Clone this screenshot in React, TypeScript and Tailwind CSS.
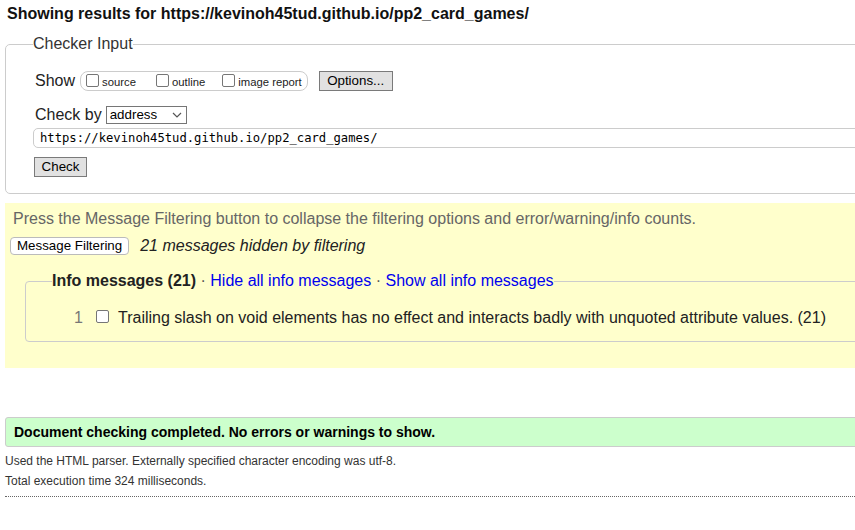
import React from 'react';

const Box = () => (
    <span className="inline-block w-[13px] h-[13px] border border-[#767676] rounded-[2px] bg-white shrink-0" />
);

const Chevron = () => (
    <svg width="10" height="6" viewBox="0 0 10 6" fill="none" stroke="#555" strokeWidth="1.2"><polyline points="1 1 5 5 9 1" /></svg>
);

const winBtn = "h-[20px] px-[7px] bg-[#e1e1e1] border border-[#7a7a7a] text-[13.33px] text-black leading-none flex items-center";

export default function App() {
    return (
        <div className="w-full overflow-hidden bg-white">
            <div className="w-[880px] px-[5px] font-['Liberation_Sans',Arial,sans-serif] text-[16px] text-[#222]">
                <h2 className="pt-[5px] pl-[2px] text-[16px] font-bold leading-[18px] text-[#111]">
                    Showing results for https://kevinoh45tud.github.io/pp2_card_games/
                </h2>

                <fieldset className="mt-[12px] border border-[#ccc] rounded-[5px] pb-[16px]">
                    <legend className="ml-[27px] text-[16px] leading-[18px] text-[#333]">Checker Input</legend>
                    <div className="pl-[29px]">
                        <div className="mt-[17px] flex items-center h-[21px]">
                            <span className="mr-[5px]">Show</span>
                            <div className="flex items-center h-[20px] border border-[#ccc] rounded-[8px] pl-[5px] pr-[5px] text-[11.3px]">
                                <Box /><span className="ml-[3px] mt-[3px] mr-[20px]">source</span>
                                <Box /><span className="ml-[3px] mt-[3px] mr-[17px]">outline</span>
                                <Box /><span className="ml-[3px] mt-[3px]">image report</span>
                            </div>
                            <button className={winBtn + " ml-[11px] w-[74px] justify-center text-[13.6px]"}>Options...</button>
                        </div>
                        <div className="mt-[15px] flex items-center h-[18px]">
                            <span className="mr-[4px]">Check by</span>
                            <div className="w-[81px] h-[18px] border border-[#767676] bg-white flex items-center justify-between pl-[3px] pr-[4px] text-[13.33px] text-black">
                                <span>address</span>
                                <Chevron />
                            </div>
                        </div>
                        <div className="mt-[4px] -ml-[2px] h-[20px] border border-[#ccc] rounded-[5px] flex items-center pl-[6px] font-['DejaVu_Sans_Mono',monospace] text-[12.2px] text-black">
                            https://kevinoh45tud.github.io/pp2_card_games/
                        </div>
                        <button className={winBtn + " mt-[9px] -ml-[1px] w-[53px] justify-center"}>Check</button>
                    </div>
                </fieldset>

                <div className="mt-[9px] w-[850px] bg-[#ffffcc] px-[5px] pt-[7px] pb-[26px]">
                    <p className="pl-[3px] leading-[18px] text-[#666]">
                        Press the Message Filtering button to collapse the filtering options and error/warning/info counts.
                    </p>
                    <div className="mt-[6px] flex items-center">
                        <button className="h-[18px] px-[6px] bg-white border border-[#bbb] rounded-[4px] text-[13.33px] text-black leading-none">
                            Message Filtering
                        </button>
                        <span className="ml-[11px] italic text-[#222]">21 messages hidden by filtering</span>
                    </div>
                    <fieldset className="mt-[14px] ml-[15px] w-[900px] border border-[#ccc] rounded-[4px] pb-[14px]">
                        <legend className="ml-[26px] leading-[18px]">
                            <b className="text-[#222]">Info messages (21)</b>
                            <span className="text-[#555]"> · </span>
                            <a className="text-[#0000ee]">Hide all info messages</a>
                            <span className="text-[#555]"> · </span>
                            <a className="text-[#0000ee]">Show all info messages</a>
                        </legend>
                        <div className="mt-[19px] flex items-center h-[18px]">
                            <span className="ml-[48px] w-[12px] text-[#777]">1</span>
                            <span className="ml-[10px]"><Box /></span>
                            <span className="ml-[9px] text-[#222]">Trailing slash on void elements has no effect and interacts badly with unquoted attribute values. (21)</span>
                        </div>
                    </fieldset>
                </div>

                <div className="mt-[49px] h-[30px] bg-[#ccffcc] border border-[#ccc] rounded-[3px] flex items-center pl-[8px] text-[14px] font-bold text-black">
                    Document checking completed. No errors or warnings to show.
                </div>
                <p className="mt-[7px] text-[12px] leading-[14px] text-[#333]">
                    Used the HTML parser. Externally specified character encoding was utf-8.
                </p>
                <p className="mt-[6px] text-[12px] leading-[14px] text-[#333]">Total execution time 324 milliseconds.</p>
                <div className="mt-[8px] border-t border-dotted border-[#666]" />
                <div className="h-[30px]" />
            </div>
        </div>
    );
}
